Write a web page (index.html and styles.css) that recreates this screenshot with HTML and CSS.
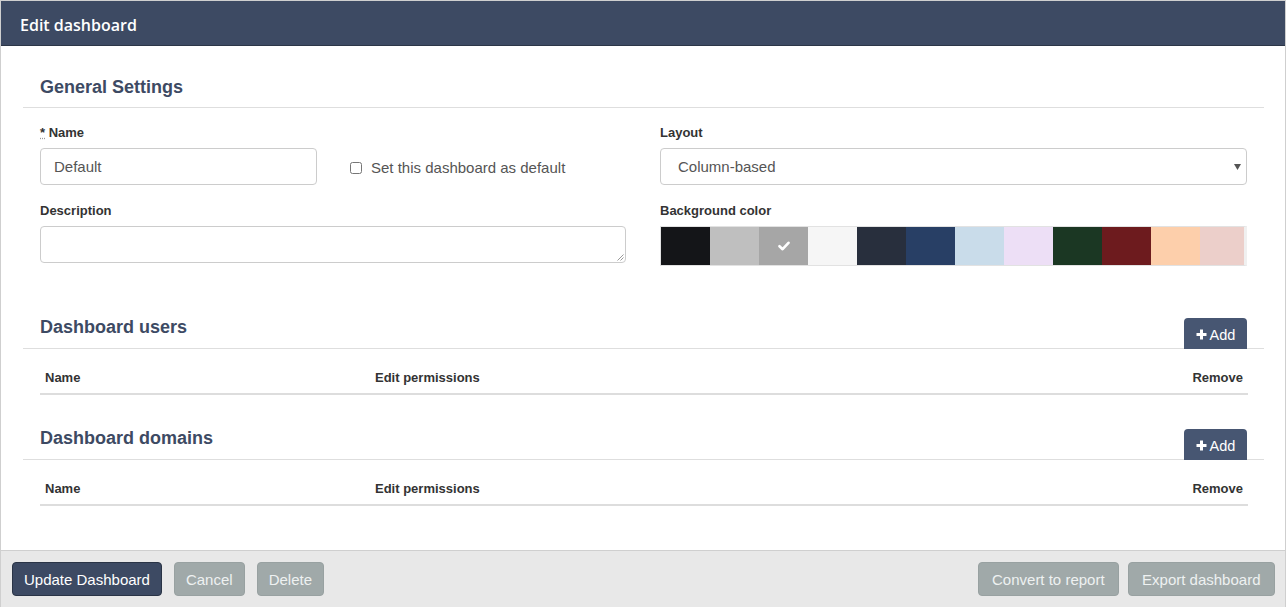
FILE: index.html
```html
<!DOCTYPE html>
<html>
<head>
<meta charset="utf-8">
<link rel="stylesheet" href="styles.css">
</head>
<body>
<div class="modal">
  <div class="modal-header"><span class="title">Edit dashboard</span></div>
  <div class="modal-body">
    <div class="section-head first">
      <h2>General Settings</h2>
    </div>
    <div class="form-grid">
      <div class="col">
        <label class="lbl"><span class="req">*</span> Name</label>
        <div class="name-row">
          <div class="input">Default</div>
          <label class="check"><input type="checkbox"><span>Set this dashboard as default</span></label>
        </div>
        <label class="lbl second">Description</label>
        <div class="textarea">
          <svg class="grip" width="7" height="7" viewBox="0 0 7 7"><path d="M6.5 0.5 L0.5 6.5 M6.5 3.5 L3.5 6.5" stroke="#999" stroke-width="1" fill="none"/></svg>
        </div>
      </div>
      <div class="col">
        <label class="lbl">Layout</label>
        <div class="select">Column-based
          <svg class="caret" width="7" height="6" viewBox="0 0 7 6"><path d="M0 0 H7 L3.5 6 Z" fill="#555"/></svg>
        </div>
        <label class="lbl second">Background color</label>
        <div class="swatches">
          <div class="sw c1"></div>
          <div class="sw c2"></div>
          <div class="sw c3"><svg width="12" height="10" viewBox="0 0 12 10"><path d="M1.5 5.2 L4.6 8.2 L10.5 1.8" stroke="#fff" stroke-width="2.6" fill="none" stroke-linecap="round" stroke-linejoin="round"/></svg></div>
          <div class="sw c4"></div>
          <div class="sw c5"></div>
          <div class="sw c6"></div>
          <div class="sw c7"></div>
          <div class="sw c8"></div>
          <div class="sw c9"></div>
          <div class="sw c10"></div>
          <div class="sw c11"></div>
          <div class="sw c12"></div>
        </div>
      </div>
    </div>

    <div class="section-head">
      <h2>Dashboard users</h2>
      <button class="add"><svg width="11" height="11" viewBox="0 0 11 11"><path d="M5.5 0.5 V10.5 M0.5 5.5 H10.5" stroke="#fff" stroke-width="3"/></svg>Add</button>
    </div>
    <table class="tbl">
      <thead><tr><th class="c-name">Name</th><th>Edit permissions</th><th class="c-rm">Remove</th></tr></thead>
    </table>

    <div class="section-head">
      <h2>Dashboard domains</h2>
      <button class="add"><svg width="11" height="11" viewBox="0 0 11 11"><path d="M5.5 0.5 V10.5 M0.5 5.5 H10.5" stroke="#fff" stroke-width="3"/></svg>Add</button>
    </div>
    <table class="tbl">
      <thead><tr><th class="c-name">Name</th><th>Edit permissions</th><th class="c-rm">Remove</th></tr></thead>
    </table>
  </div>
  <div class="modal-footer">
    <div class="left">
      <button class="btn primary">Update Dashboard</button>
      <button class="btn grey">Cancel</button>
      <button class="btn grey">Delete</button>
    </div>
    <div class="right">
      <button class="btn grey">Convert to report</button>
      <button class="btn grey">Export dashboard</button>
    </div>
  </div>
</div>
</body>
</html>
```

FILE: styles.css
```css
* { box-sizing: border-box; }
html, body { margin: 0; padding: 0; background: #fff; }
body { font-family: "Liberation Sans", Arial, sans-serif; color: #333; }

.modal {
  width: 1286px;
  height: 607px;
  border: 1px solid #cfcfcf;
  border-bottom: none;
  display: flex;
  flex-direction: column;
  background: #fff;
}
.modal-header {
  height: 45px;
  flex: 0 0 45px;
  background: #3d4a63;
  border-bottom: 1px solid #2c3647;
  color: #fff;
  padding-left: 19px;
  display: flex;
  align-items: center;
}
.title {
  font-family: "Open Sans", sans-serif;
  font-weight: 600;
  font-size: 16px;
  line-height: 20px;
  margin-top: 3px;
}
.modal-body {
  flex: 1;
  padding: 0 21px 0 22px;
}
.section-head {
  display: flex;
  justify-content: space-between;
  align-items: flex-end;
  border-bottom: 1px solid #dedede;
  padding: 0 17px;
  margin-top: 33px;
}
.section-head.first { margin-top: 31px; }
h2 {
  margin: 0;
  font-size: 18px;
  line-height: 20px;
  font-weight: bold;
  color: #3d4a63;
  padding-bottom: 10px;
}
.section-head:not(.first) h2 { padding-bottom: 11px; }

.form-grid {
  display: grid;
  grid-template-columns: 586px 587px;
  column-gap: 34px;
  padding: 17px 17px 0 17px;
  margin-bottom: 51px;
}
.col { display: flex; flex-direction: column; }
.lbl {
  font-size: 13px;
  font-weight: bold;
  line-height: 16px;
  margin-bottom: 7px;
  color: #333;
}
.lbl.second { margin-top: 18px; }
.req { text-decoration: underline dotted #999; }
.name-row { display: flex; align-items: center; }
.input, .select, .textarea {
  border: 1px solid #ccc;
  border-radius: 4px;
  background: #fff;
  font-size: 15px;
  color: #555;
}
.input {
  width: 277px;
  height: 37px;
  line-height: 35px;
  padding-left: 13px;
}
.check {
  display: flex;
  align-items: center;
  margin-left: 33px;
  margin-top: 2px;
  font-size: 15px;
  color: #555;
}
.check input {
  margin: 0 9px 0 0;
  width: 12px;
  height: 12px;
}
.textarea {
  height: 37px;
  position: relative;
}
.grip { position: absolute; right: 1px; bottom: 1px; }
.select {
  height: 37px;
  line-height: 35px;
  padding-left: 17px;
  position: relative;
}
.caret { position: absolute; right: 5px; top: 15px; }
.swatches {
  display: flex;
  height: 40px;
  border: 1px solid #e2e2e2;
  border-right-width: 3px;
  border-right-color: #f0f0f0;
}
.sw {
  flex: 0 0 49px;
  display: flex;
  align-items: center;
  justify-content: center;
}
.sw:last-child { flex: 1; }
.c1 { background: #141518; }
.c2 { background: #bfbfbf; }
.c3 { background: #a6a6a6; }
.c4 { background: #f6f6f6; }
.c5 { background: #282f3d; }
.c6 { background: #283f65; }
.c7 { background: #c9dcea; }
.c8 { background: #eddff6; }
.c9 { background: #1b3723; }
.c10 { background: #6d1b1e; }
.c11 { background: #fdcfab; }
.c12 { background: #eccfca; }

.add {
  width: 63px;
  height: 31px;
  margin-bottom: -1px;
  border: none;
  border-radius: 4px 4px 0 0;
  background: #475672;
  color: #fff;
  font-family: "Liberation Sans", Arial, sans-serif;
  font-size: 14.5px;
  display: flex;
  align-items: center;
  justify-content: center;
  padding: 2px 0 0 0;
}
.add svg { margin-right: 3px; margin-top: -1px; }

.tbl {
  width: 1208px;
  margin: 13px 0 0 17px;
  border-collapse: collapse;
}
.tbl th {
  text-align: left;
  font-size: 13px;
  font-weight: bold;
  line-height: 16px;
  padding: 8px 5px 7px 5px;
  border-bottom: 2px solid #ddd;
  color: #333;
}
.tbl th.c-name { width: 330px; }
.tbl th.c-rm { text-align: right; }

.modal-footer {
  flex: 0 0 57px;
  height: 57px;
  background: #e8e8e8;
  border-top: 1px solid #cfcfcf;
  display: flex;
  justify-content: space-between;
  padding: 11px 10px 0 11px;
}
.left, .right { display: flex; gap: 12px; align-items: flex-start; }
.right { gap: 9px; }
.btn {
  height: 34px;
  font-family: "Liberation Sans", Arial, sans-serif;
  font-size: 15px;
  padding: 0 11px;
  border-radius: 4px;
  border: 1px solid transparent;
}
.btn.primary {
  background: #3d4a63;
  border-color: #2a3446;
  color: #fff;
}
.btn.grey {
  background: #a0a9a9;
  border-color: #98a1a1;
  color: #eef1f1;
  padding: 0 13px;
}
.right .btn.grey:last-child { padding: 0 13.5px; }
.left .btn.grey { padding: 0 11px; }
```
